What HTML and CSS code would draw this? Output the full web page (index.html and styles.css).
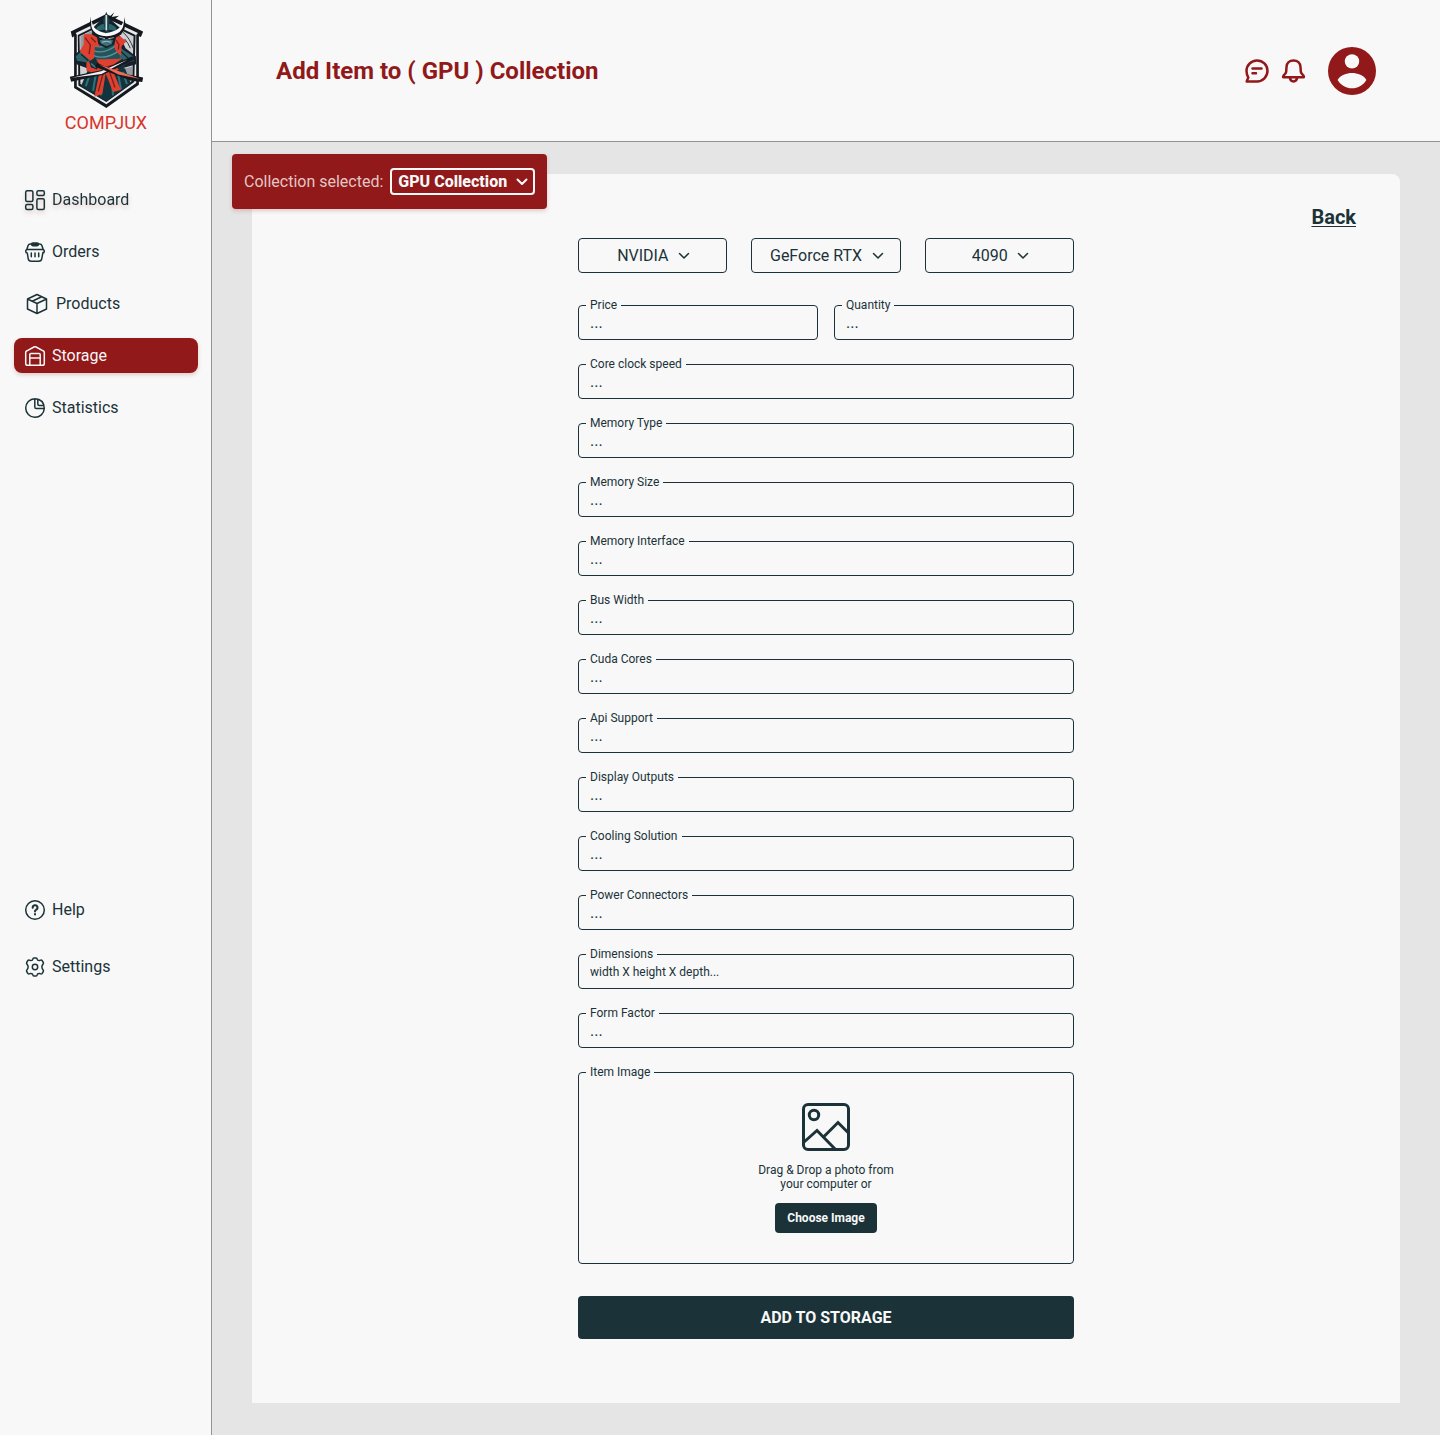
FILE: index.html
```html
<!DOCTYPE html>
<html lang="en">
<head>
<meta charset="utf-8">
<meta name="viewport" content="width=device-width, initial-scale=1">
<title>Compjux – Add Item</title>
<link rel="stylesheet" href="styles.css">
</head>
<body>
<div class="app">
  <aside class="sidebar">
    <div class="sidebar-inner">
      <a class="brand" href="#">
        <svg class="brand-logo" viewBox="40 18 222 295" aria-hidden="true">
          <path d="M45 80 152 27 263 80 256 96 250 94 250 240 152 310 55 250 55 94 49 98Z" fill="#14181f"/>
          <path d="M60 84 152 40 247 84 242 90 242 235 152 299 63 245 63 90Z" fill="#e9ebed"/>
          <path d="M66 90 152 48 240 90 236 232 152 292 68 242Z" fill="#14181f"/>
          <path d="M71 94 152 54 234 94 230 228 152 284 74 238Z" fill="#cfd2d5"/>
          <path d="M74 94 112 76 96 150 74 180ZM230 185 206 192 212 232 230 224Z" fill="#959ba3"/>
          <path d="M202 82 Q222 98 234 132M207 102 Q218 114 224 130" fill="none" stroke="#30353c" stroke-width="3"/>
          <path d="M96 196 76 244 152 290 226 236 208 190Z" fill="#12343c"/>
          <path d="M104 205 90 244M120 210 112 258M140 215 136 272M168 215 172 272M188 210 196 254M202 202 214 238" stroke="#347078" stroke-width="6" fill="none"/>
          <path d="M103 92 82 130 55 150 56 176 94 190 208 188 242 178 241 154 210 130 192 92Z" fill="#15202a"/>
          <path d="M92 126 60 154 64 168 112 176 104 152 110 140ZM190 126 232 154 235 168 198 178 190 158Z" fill="#2d656d"/>
          <path d="M92 138 104 156M76 148 98 168M194 138 222 164" stroke="#12252c" stroke-width="4"/>
          <path d="M110 102 185 102 194 166 152 180 110 166Z" fill="#24545b"/>
          <path d="M114 138Q150 150 188 116M114 152Q150 166 190 138M118 124Q150 132 180 108" fill="none" stroke="#5b9297" stroke-width="4"/>
          <path d="M84 88 116 88 134 106 130 128 118 122 114 174 88 154 72 140 84 118Z" fill="#e0402f"/>
          <path d="M88 98 104 120 100 148M106 98 120 112" fill="none" stroke="#7c1f1d" stroke-width="4"/>
          <path d="M174 94 194 94 212 110 198 124 196 154 178 134Z" fill="#e0402f"/>
          <path d="M182 106 190 120 188 134" fill="none" stroke="#7c1f1d" stroke-width="4"/>
          <path d="M92 172 122 164 198 162 206 184 174 204 196 256 172 262 158 226 150 206 140 268 116 276 130 210 92 198Z" fill="#e0402f"/>
          <path d="M108 180 142 190 184 178M144 198 128 260M162 202 178 248" fill="none" stroke="#7c1f1d" stroke-width="4"/>
          <path d="M100 170 118 158 130 178 124 194 106 188ZM178 176 200 162 214 174 204 192 188 194Z" fill="#163039"/>
          <path d="M106 176 120 188M186 184 204 178" stroke="#4b838a" stroke-width="4"/>
          <path d="M42 216 46 231 142 210 236 164 230 154 136 196Z" fill="#15181f"/>
          <path d="M48 219 136 199 216 165 138 208Z" fill="#f2eeee"/>
          <path d="M263 218 260 232 226 228 118 186 124 174 186 202Z" fill="#15181f"/>
          <path d="M254 223 192 200 130 179 188 209Z" fill="#f06a56"/>
          <path d="M114 66 150 30 190 66 198 88 182 96 176 118 152 130 128 118 124 98 108 88Z" fill="#12242d"/>
          <path d="M124 66Q152 44 180 66L184 80Q152 68 120 80Z" fill="#2c656d"/>
          <path d="M132 91 149 96 147 102 130 97ZM157 96 176 91 174 99 159 102Z" fill="#d9dcde"/>
          <path d="M132 106Q152 100 172 106L168 118 152 124 136 116Z" fill="#3d7078"/>
          <path d="M138 112Q152 106 166 112" stroke="#a7c2c5" stroke-width="3" fill="none"/>
          <path d="M106 34Q100 84 150 92Q208 86 206 36Q222 98 152 100Q90 94 106 34Z" fill="#15181f"/>
          <path d="M108 42Q108 78 150 84Q196 80 204 46Q208 90 152 94Q98 90 108 42Z" fill="#fafafa"/>
          <path d="M142 46 152 20 162 46 158 80 150 86Z" fill="#1b4048"/>
          <path d="M152 30V76" stroke="#d8dfe1" stroke-width="5"/>
          <path d="M158 38 176 22 168 36 190 32 170 48" fill="#14181f"/>
        </svg>
        <span class="brand-name">COMPJUX</span>
      </a>
      <nav class="nav" aria-label="Main">
        <a class="nav-item nav-item-dashboard" href="#">
          <svg class="icon" viewBox="0 0 24 24" aria-hidden="true"><rect x="2.7" y="2.7" width="7.2" height="10.8" rx="1.5"/><rect x="2.7" y="16.6" width="7.2" height="4.8" rx="1.5"/><rect x="13.9" y="2.7" width="7.4" height="4.8" rx="1.5"/><rect x="13.9" y="10.8" width="7.4" height="10.6" rx="1.5"/></svg>
          Dashboard
        </a>
        <a class="nav-item" href="#">
          <svg class="icon" viewBox="0 0 24 24" aria-hidden="true"><path d="M3.800 9.500 5 5.800Q5.600 4 7.400 4H8.500M15.500 4H16.600Q18.400 4 19 5.800L20.200 9.500M2.700 11.300Q2.700 9.500 4.500 9.500H19.500Q21.300 9.500 21.300 11.300T19.900 13.100M2.700 11.300Q2.700 13.100 4.300 13.100L5.200 18.600Q5.700 21.300 8.400 21.300H15.600Q18.300 21.300 18.800 18.600L19.900 12.600M8.300 13V16.800M12 13V16.800M15.700 13V16.800"/><rect x="8.500" y="2.900" width="7" height="2.800" rx="1.400" fill="currentColor"/></svg>
          Orders
        </a>
        <a class="nav-item" href="#">
          <svg class="icon icon-wide" viewBox="0 0 28 24" aria-hidden="true"><path d="M14 2.500 23.500 7V17L14 21.500 4.500 17V7ZM4.500 7 14 11.500 23.500 7M14 11.500V21.500M9.200 9.200 18.700 4.700"/></svg>
          Products
        </a>
        <a class="nav-item nav-item-active" href="#" aria-current="page">
          <svg class="icon" viewBox="0 0 24 24" aria-hidden="true"><path d="M2.700 19.500V8.600Q2.700 7.300 3.900 6.800L10.900 3Q12 2.500 13.100 3L20.100 6.800Q21.300 7.300 21.300 8.600V19.500Q21.300 21.300 19.500 21.300H4.500Q2.700 21.300 2.700 19.500ZM6.800 21V10.600Q6.800 9.500 7.900 9.500H16.100Q17.200 9.500 17.200 10.600V21M6.800 13.900H17.200"/></svg>
          Storage
        </a>
        <a class="nav-item" href="#">
          <svg class="icon" viewBox="0 0 24 24" aria-hidden="true"><path d="M11.800 2.700A9.300 9.300 0 1 0 21.300 12.500H13.400Q11.800 12.500 11.800 10.900ZM11.800 2.700Q21.100 3 21.300 12.500M14.800 3.500V8Q14.800 9.500 16.300 9.500H20.500"/></svg>
          Statistics
        </a>
      </nav>
      <nav class="nav nav-secondary" aria-label="Support">
        <a class="nav-item" href="#">
          <svg class="icon" viewBox="0 0 24 24" aria-hidden="true"><circle cx="12" cy="12" r="9.300"/><path stroke-width="2" d="M9.700 9.800A2.400 2.400 0 1 1 13 11.800Q12 12.300 12 13.500M12 16V16.600"/></svg>
          Help
        </a>
        <a class="nav-item" href="#">
          <svg class="icon" viewBox="0 0 24 24" aria-hidden="true"><circle cx="12" cy="12" r="2.700"/><path d="M9.800 4.300Q9.900 2.900 11 2.900H13Q14.100 2.900 14.200 4.300T16.400 5.600L17.700 5.100Q18.600 4.800 19.200 5.700L20.300 7.500Q20.800 8.500 20 9.200L19.600 9.800Q18.900 10.800 18.900 12T19.600 14.200L20 14.800Q20.800 15.500 20.300 16.500L19.200 18.300Q18.600 19.200 17.700 18.900L16.400 18.400Q14.300 18.300 14.200 19.700 14.100 21.100 13 21.100H11Q9.900 21.100 9.800 19.700T7.600 18.400L6.300 18.900Q5.400 19.200 4.800 18.300L3.700 16.500Q3.200 15.500 4 14.800L4.400 14.200Q5.100 13.200 5.100 12T4.400 9.800L4 9.200Q3.200 8.500 3.700 7.500L4.800 5.700Q5.400 4.800 6.300 5.100L7.600 5.600Q9.700 5.700 9.800 4.300Z"/></svg>
          Settings
        </a>
      </nav>
    </div>
  </aside>

  <div class="page">
    <header class="topbar">
      <h1 class="title">Add Item to ( GPU ) Collection</h1>
      <div class="actions">
        <button class="icon-button" type="button" aria-label="Messages">
          <svg viewBox="0 0 24 24" aria-hidden="true"><path d="M.700 22.400 2.300 18.500Q.500 15.300.500 12A10.500 10.500 0 1 1 11 22.400ZM6.500 9.500H15.500M6.500 14.300H10"/></svg>
        </button>
        <button class="icon-button" type="button" aria-label="Notifications">
          <svg viewBox="0 0 24 24" aria-hidden="true"><path d="M11.500 1.500C7.500 1.500 4.700 4 4.500 8L4.200 12.500Q4 13.900 3 15L1.500 16.700Q.900 17.500 1.200 18.200H21.800Q22.100 17.500 21.500 16.700L20 15Q19 13.900 18.800 12.500L18.500 8C18.300 4 15.500 1.500 11.500 1.500ZM7.800 18.800Q8.500 22.400 11.500 22.400T15.200 18.800"/></svg>
        </button>
        <button class="avatar" type="button" aria-label="Account">
          <svg viewBox="0 0 48 48" aria-hidden="true"><circle cx="24" cy="24" r="24" fill="#911919"/><circle cx="24" cy="14.400" r="7.200" fill="#f8f8f8"/><path d="M9.600 33C11.500 28.500 19 26 24 26S36.500 28.500 38.400 33C35.500 38 30 41.300 24 41.300S12.500 38 9.600 33Z" fill="#f8f8f8"/></svg>
        </button>
      </div>
    </header>

    <main class="content">
      <div class="collection">
        <label for="collection">Collection selected:</label>
        <span class="collection-select">
          <select id="collection"><option>GPU Collection</option></select>
          <svg class="chevron" viewBox="0 0 12 8" aria-hidden="true"><path d="M1.500 1.500 6 6 10.500 1.500"/></svg>
        </span>
      </div>

      <section class="card">
        <a class="back" href="#">Back</a>
        <form class="form">
          <div class="row row-selects">
            <label class="pick"><select aria-label="Manufacturer"><option>NVIDIA</option></select><svg class="chevron" viewBox="0 0 12 8" aria-hidden="true"><path d="M1.500 1.500 6 6 10.500 1.500"/></svg></label>
            <label class="pick"><select aria-label="Series"><option>GeForce RTX</option></select><svg class="chevron" viewBox="0 0 12 8" aria-hidden="true"><path d="M1.500 1.500 6 6 10.500 1.500"/></svg></label>
            <label class="pick"><select aria-label="Model"><option>4090</option></select><svg class="chevron" viewBox="0 0 12 8" aria-hidden="true"><path d="M1.500 1.500 6 6 10.500 1.500"/></svg></label>
          </div>
          <div class="row row-pair">
            <div class="field"><label for="price">Price</label><input id="price" type="text" placeholder="..."></div>
            <div class="field"><label for="quantity">Quantity</label><input id="quantity" type="text" placeholder="..."></div>
          </div>
          <div class="field"><label for="clock">Core clock speed</label><input id="clock" type="text" placeholder="..."></div>
          <div class="field"><label for="memtype">Memory Type</label><input id="memtype" type="text" placeholder="..."></div>
          <div class="field"><label for="memsize">Memory Size</label><input id="memsize" type="text" placeholder="..."></div>
          <div class="field"><label for="memif">Memory Interface</label><input id="memif" type="text" placeholder="..."></div>
          <div class="field"><label for="bus">Bus Width</label><input id="bus" type="text" placeholder="..."></div>
          <div class="field"><label for="cuda">Cuda Cores</label><input id="cuda" type="text" placeholder="..."></div>
          <div class="field"><label for="api">Api Support</label><input id="api" type="text" placeholder="..."></div>
          <div class="field"><label for="outputs">Display Outputs</label><input id="outputs" type="text" placeholder="..."></div>
          <div class="field"><label for="cooling">Cooling Solution</label><input id="cooling" type="text" placeholder="..."></div>
          <div class="field"><label for="power">Power Connectors</label><input id="power" type="text" placeholder="..."></div>
          <div class="field"><label for="dims">Dimensions</label><input id="dims" class="input-small" type="text" placeholder="width X height X depth..."></div>
          <div class="field"><label for="form-factor">Form Factor</label><input id="form-factor" type="text" placeholder="..."></div>
          <div class="field">
            <label for="choose">Item Image</label>
            <div class="dropzone">
              <svg class="picture" viewBox="0 0 48 48" aria-hidden="true"><rect x="1.500" y="1.500" width="45" height="45" rx="4.500"/><circle cx="12" cy="12" r="4.700"/><path d="M1.500 39.500 15 27.500 33.500 46.500M22 33.500 36 19.500 46.500 30"/></svg>
              <p class="drop-text">Drag &amp; Drop a photo from your computer or</p>
              <button id="choose" class="choose" type="button">Choose Image</button>
            </div>
          </div>
          <button class="submit" type="submit">ADD TO STORAGE</button>
        </form>
      </section>
    </main>
  </div>
</div>
</body>
</html>
```
FILE: styles.css
```css
:root {
  --red: #911919;
  --ink: #1b3338;
  --paper: #f8f8f8;
  --line: #939393;
}

* {
  box-sizing: border-box;
}

body {
  margin: 0;
  background: #e5e5e5;
  color: var(--ink);
  font-family: Roboto, sans-serif;
  font-size: 16px;
  line-height: 19px;
}

a {
  color: inherit;
  text-decoration: none;
}

button,
input,
select {
  margin: 0;
  font: inherit;
  color: inherit;
}

svg {
  display: block;
  flex: none;
}

.app {
  display: flex;
  min-height: 100vh;
}

/* Sidebar */

.sidebar {
  flex: none;
  width: 212px;
  border-right: 1px solid var(--line);
  background: var(--paper);
}

.sidebar-inner {
  display: flex;
  flex-direction: column;
  min-height: 1024px;
  padding: 11px 13px 40px 14px;
}

.brand {
  display: flex;
  flex-direction: column;
  align-items: center;
  gap: 3px;
  margin-bottom: 49px;
  color: #d8352a;
}

.brand-logo {
  width: 74px;
  height: 98px;
}

.brand-name {
  font-size: 18px;
  line-height: 21px;
}

.nav {
  display: flex;
  flex-direction: column;
  gap: 17px;
}

.nav-secondary {
  gap: 22px;
  margin-top: auto;
}

.nav-item {
  display: flex;
  align-items: center;
  gap: 5px;
  height: 35px;
  padding: 0 9px;
  border-radius: 8px;
}

.nav-item-dashboard {
  filter: drop-shadow(0 3px 2px rgba(145, 25, 25, 0.2));
}

.nav-item-active {
  background: var(--red);
  color: var(--paper);
  box-shadow: 0 2px 4px rgba(145, 25, 25, 0.2);
}

.icon {
  width: 24px;
  height: 24px;
  fill: none;
  stroke: currentColor;
  stroke-width: 1.5;
  stroke-linecap: round;
  stroke-linejoin: round;
}

.icon-wide {
  width: 28px;
}

/* Top bar */

.page {
  flex: 1;
  min-width: 0;
}

.topbar {
  display: flex;
  align-items: center;
  justify-content: space-between;
  height: 142px;
  padding: 0 64px;
  border-bottom: 1px solid var(--line);
  background: var(--paper);
  color: var(--red);
}

.title {
  margin: 0;
  font-size: 24px;
  font-weight: 700;
  line-height: 28px;
}

.actions {
  display: flex;
  align-items: center;
  gap: 12px;
}

.icon-button,
.avatar {
  padding: 0;
  border: 0;
  background: none;
}

.icon-button svg {
  width: 24px;
  height: 24px;
  overflow: visible;
  fill: none;
  stroke: currentColor;
  stroke-width: 2.5;
  stroke-linecap: round;
  stroke-linejoin: round;
}

.avatar {
  margin-left: 10px;
}

.avatar svg {
  width: 48px;
  height: 48px;
}

/* Content */

.content {
  position: relative;
  padding: 32px 40px;
}

.collection {
  position: absolute;
  top: 12px;
  left: 20px;
  display: flex;
  align-items: center;
  gap: 7px;
  height: 55px;
  padding: 0 12px;
  border-radius: 4px;
  background: var(--red);
  box-shadow: 0 2px 4px rgba(145, 25, 25, 0.2);
  color: #e3c6c6;
}

.collection-select {
  display: flex;
  align-items: center;
  gap: 9px;
  padding: 2px 5px 2px 6px;
  border: 2px solid var(--paper);
  border-radius: 4px;
  color: var(--paper);
  font-weight: 800;
}

select {
  appearance: none;
  padding: 0;
  border: 0;
  background: none;
}

.chevron {
  width: 12px;
  height: 8px;
  fill: none;
  stroke: currentColor;
  stroke-width: 1.5;
  stroke-linecap: round;
  stroke-linejoin: round;
}

.collection .chevron {
  stroke-width: 2;
}

.card {
  display: flex;
  flex-direction: column;
  padding: 31px 44px 64px;
  border-radius: 8px 8px 0 0;
  background: var(--paper);
}

.back {
  align-self: flex-end;
  margin-bottom: 9px;
  font-size: 20px;
  font-weight: 700;
  line-height: 24px;
  text-decoration: underline;
  text-decoration-thickness: 1px;
  text-underline-offset: 2px;
}

/* Form */

.form {
  display: flex;
  flex-direction: column;
  gap: 24px;
  width: 100%;
  max-width: 496px;
  margin: 0 auto;
}

.row {
  display: grid;
}

.row-selects {
  grid-template-columns: repeat(3, 1fr);
  gap: 24px;
  margin-bottom: 8px;
}

.row-pair {
  grid-template-columns: 1fr 1fr;
  gap: 16px;
}

.pick {
  display: flex;
  align-items: center;
  justify-content: center;
  gap: 9px;
  height: 35px;
  padding-left: 2px;
  border: 1px solid var(--ink);
  border-radius: 4px;
}

.field {
  position: relative;
}

.field label {
  position: absolute;
  top: -7px;
  left: 8px;
  padding: 0 4px;
  background: var(--paper);
  font-size: 12px;
  line-height: 14px;
}

.field input {
  display: block;
  width: 100%;
  height: 35px;
  padding: 0 11px;
  border: 1px solid var(--ink);
  border-radius: 4px;
  background: transparent;
}

.field .input-small {
  font-size: 12px;
}

.field input::placeholder {
  color: var(--ink);
  opacity: 1;
}

.dropzone {
  display: flex;
  flex-direction: column;
  align-items: center;
  gap: 12px;
  padding: 30px 16px;
  border: 1px solid var(--ink);
  border-radius: 4px;
}

.picture {
  width: 48px;
  height: 48px;
  fill: none;
  stroke: currentColor;
  stroke-width: 3;
}

.drop-text {
  max-width: 144px;
  margin: 0;
  font-size: 12px;
  line-height: 14px;
  text-align: center;
}

.choose {
  height: 30px;
  padding: 0 12px;
  border: 0;
  border-radius: 4px;
  background: var(--ink);
  color: var(--paper);
  font-size: 12px;
  font-weight: 700;
}

.submit {
  height: 43px;
  margin-top: 8px;
  border: 0;
  border-radius: 4px;
  background: var(--ink);
  color: var(--paper);
  font-weight: 700;
}
```
